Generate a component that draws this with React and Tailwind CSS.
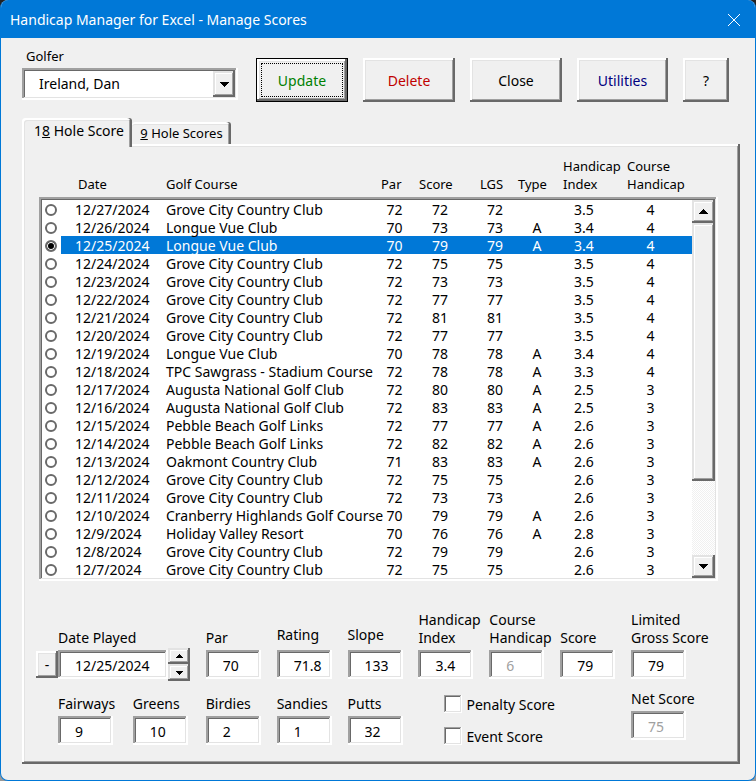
import { useState } from 'react';
import clsx from 'clsx';

const GROVE = 'Grove City Country Club';
const LONGUE = 'Longue Vue Club';
const AUGUSTA = 'Augusta National Golf Club';
const PEBBLE = 'Pebble Beach Golf Links';

const rounds = [
    { date: '12/27/2024', course: GROVE, par: 72, score: 72, lgs: 72, type: '', index: '3.5', handicap: 4 },
    { date: '12/26/2024', course: LONGUE, par: 70, score: 73, lgs: 73, type: 'A', index: '3.4', handicap: 4 },
    { date: '12/25/2024', course: LONGUE, par: 70, score: 79, lgs: 79, type: 'A', index: '3.4', handicap: 4 },
    { date: '12/24/2024', course: GROVE, par: 72, score: 75, lgs: 75, type: '', index: '3.5', handicap: 4 },
    { date: '12/23/2024', course: GROVE, par: 72, score: 73, lgs: 73, type: '', index: '3.5', handicap: 4 },
    { date: '12/22/2024', course: GROVE, par: 72, score: 77, lgs: 77, type: '', index: '3.5', handicap: 4 },
    { date: '12/21/2024', course: GROVE, par: 72, score: 81, lgs: 81, type: '', index: '3.5', handicap: 4 },
    { date: '12/20/2024', course: GROVE, par: 72, score: 77, lgs: 77, type: '', index: '3.5', handicap: 4 },
    { date: '12/19/2024', course: LONGUE, par: 70, score: 78, lgs: 78, type: 'A', index: '3.4', handicap: 4 },
    { date: '12/18/2024', course: 'TPC Sawgrass - Stadium Course', par: 72, score: 78, lgs: 78, type: 'A', index: '3.3', handicap: 4 },
    { date: '12/17/2024', course: AUGUSTA, par: 72, score: 80, lgs: 80, type: 'A', index: '2.5', handicap: 3 },
    { date: '12/16/2024', course: AUGUSTA, par: 72, score: 83, lgs: 83, type: 'A', index: '2.5', handicap: 3 },
    { date: '12/15/2024', course: PEBBLE, par: 72, score: 77, lgs: 77, type: 'A', index: '2.6', handicap: 3 },
    { date: '12/14/2024', course: PEBBLE, par: 72, score: 82, lgs: 82, type: 'A', index: '2.6', handicap: 3 },
    { date: '12/13/2024', course: 'Oakmont Country Club', par: 71, score: 83, lgs: 83, type: 'A', index: '2.6', handicap: 3 },
    { date: '12/12/2024', course: GROVE, par: 72, score: 75, lgs: 75, type: '', index: '2.6', handicap: 3 },
    { date: '12/11/2024', course: GROVE, par: 72, score: 73, lgs: 73, type: '', index: '2.6', handicap: 3 },
    { date: '12/10/2024', course: 'Cranberry Highlands Golf Course', par: 70, score: 79, lgs: 79, type: 'A', index: '2.6', handicap: 3 },
    { date: '12/9/2024', course: 'Holiday Valley Resort', par: 70, score: 76, lgs: 76, type: 'A', index: '2.8', handicap: 3 },
    { date: '12/8/2024', course: GROVE, par: 72, score: 79, lgs: 79, type: '', index: '2.6', handicap: 3 },
    { date: '12/7/2024', course: GROVE, par: 72, score: 75, lgs: 75, type: '', index: '2.6', handicap: 3 }
];

// Classic 3D bevels
const SUNKEN = 'shadow-[inset_-2px_-2px_#fff,inset_2px_2px_#a0a0a0,inset_-3px_-3px_#e3e3e3,inset_3px_3px_#696969]';
const RAISED = 'shadow-[inset_-2px_-2px_#696969,inset_2px_2px_#fff,inset_-3px_-3px_#a0a0a0,inset_3px_3px_#e3e3e3]';
const SCROLL = 'shadow-[inset_-2px_-2px_#696969,inset_2px_2px_#e3e3e3,inset_-3px_-3px_#a0a0a0,inset_3px_3px_#fff]';

const Arrow = ({ up, small }) => (
    <svg viewBox="0 0 9 5" className={clsx(small ? 'w-[7px] h-1' : 'w-[9px] h-[5px]')} shapeRendering="crispEdges" aria-hidden="true">
        <path d={up ? 'M0 5 L4.5 0 L9 5 Z' : 'M0 0 L4.5 5 L9 0 Z'} />
    </svg>
);

const ActionButton = ({ className, children }) => (
    <button type="button" className={clsx('h-11 bg-[#f0f0f0] pt-0.5', RAISED, className)}>{children}</button>
);

const Field = ({ id, label, value, disabled, className, labelClassName }) => (
    <div className={clsx('flex min-w-0 flex-col items-start', className)}>
        <label htmlFor={id} className={clsx('whitespace-pre leading-[18px]', labelClassName || 'mb-[3px]')}>{label}</label>
        <input
            id={id}
            defaultValue={value}
            disabled={disabled}
            className={clsx('h-[29px] w-[55px] bg-white pl-[17px] pr-1 pt-0.5 disabled:text-[#a0a0a0]', SUNKEN)}
        />
    </div>
);

const Check = ({ id, label }) => (
    <div className="flex h-[18px] items-center gap-1">
        <input
            id={id}
            type="checkbox"
            className="size-[18px] appearance-none bg-white shadow-[inset_-1px_-1px_#fff,inset_1px_1px_#a0a0a0,inset_-2px_-2px_#e3e3e3,inset_2px_2px_#696969] checked:bg-[#696969]"
        />
        <label htmlFor={id} className="whitespace-nowrap pt-0.5">{label}</label>
    </div>
);

const ScoreTable = ({ selected, onSelect }) => (
    <div>
        <table className="w-full table-fixed text-left text-[13px] leading-[18px]">
            <colgroup>
                <col className="w-[127px]" />
                <col />
                <col className="w-[38px]" />
                <col className="w-[61px]" />
                <col className="w-[38px]" />
                <col className="w-[45px]" />
                <col className="w-16" />
                <col className="w-[91px]" />
            </colgroup>
            <thead>
                <tr className="align-bottom *:p-0 *:font-normal">
                    <th className="pl-[39px]!">Date</th>
                    <th>Golf Course</th>
                    <th>Par</th>
                    <th>Score</th>
                    <th>LGS</th>
                    <th>Type</th>
                    <th>Handicap<br />Index</th>
                    <th>Course<br />Handicap</th>
                </tr>
            </thead>
        </table>
        <div className={clsx('mt-1 flex bg-white p-[3px]', SUNKEN)}>
            <div className="min-w-0 flex-1">
                <table className="w-full table-fixed text-center leading-[17px]">
                    <colgroup>
                        <col className="w-[19px]" />
                        <col className="w-[105px]" />
                        <col />
                        <col className="w-[45px]" />
                        <col className="w-[46px]" />
                        <col className="w-16" />
                        <col className="w-5" />
                        <col className="w-[74px]" />
                        <col className="w-[71px]" />
                    </colgroup>
                    <tbody>
                        {rounds.map((round, i) => (
                            <tr
                                key={round.date}
                                onClick={() => onSelect(i)}
                                className={clsx('h-[18px] *:p-0 *:pt-px', i === selected && 'text-white *:not-first:bg-[#0078d7]')}
                            >
                                <td>
                                    <input
                                        type="radio"
                                        name="round"
                                        aria-label={round.date}
                                        checked={i === selected}
                                        onChange={() => onSelect(i)}
                                        className="ml-[3px] block size-3 appearance-none rounded-full border-2 border-[#696969] bg-white checked:bg-black checked:shadow-[inset_0_0_0_1px_#fff]"
                                    />
                                </td>
                                <td className="pl-3.5! text-left">{round.date}</td>
                                <td className="text-left whitespace-nowrap">{round.course}</td>
                                <td>{round.par}</td>
                                <td>{round.score}</td>
                                <td>{round.lgs}</td>
                                <td>{round.type}</td>
                                <td>{round.index}</td>
                                <td className="pr-3!">{round.handicap}</td>
                            </tr>
                        ))}
                    </tbody>
                </table>
            </div>
            <div className="flex w-[23px] flex-col bg-[repeating-conic-gradient(#fff_0_25%,#f0f0f0_0_50%)] bg-size-[2px_2px]">
                <button type="button" aria-label="Scroll up" className={clsx('flex h-[23px] items-center justify-center bg-[#f0f0f0]', SCROLL)}>
                    <Arrow up />
                </button>
                <div className={clsx('flex-258 bg-[#f0f0f0]', SCROLL)} />
                <div className="flex-74" />
                <button type="button" aria-label="Scroll down" className={clsx('flex h-[23px] items-center justify-center bg-[#f0f0f0]', SCROLL)}>
                    <Arrow />
                </button>
            </div>
        </div>
    </div>
);

const DatePlayed = ({ date }) => (
    <div className="col-span-2">
        <label htmlFor="date-played" className="mb-[3px] block pl-[22px] leading-[18px]">Date Played</label>
        <div className="flex items-center">
            <button type="button" aria-label="Previous day" className={clsx('h-[27px] w-[22px] bg-[#f0f0f0]', RAISED)}>-</button>
            <input id="date-played" key={date} defaultValue={date} className={clsx('h-[29px] w-[110px] bg-white pl-[17px] pt-0.5', SUNKEN)} />
            <div className="-my-0.5 flex flex-col">
                <button type="button" aria-label="Later" className={clsx('flex h-4 w-[22px] items-center justify-center bg-[#f0f0f0]', SCROLL)}>
                    <Arrow up small />
                </button>
                <button type="button" aria-label="Earlier" className={clsx('flex h-[17px] w-[22px] items-center justify-center bg-[#f0f0f0]', SCROLL)}>
                    <Arrow small />
                </button>
            </div>
        </div>
    </div>
);

const App = () => {
    const [selected, setSelected] = useState(2);

    return (
        <div className="min-h-screen bg-linear-to-b from-[#222222] to-[#999999] font-['Noto_Sans','Open_Sans',sans-serif] text-sm text-black">
            <div className="flex min-h-screen flex-col overflow-hidden rounded-lg border-x border-b border-[#0078d7] bg-[#f0f0f0]">
                <header className="flex h-[38px] items-center justify-between bg-[#0078d7] pt-0.5 pl-[9px] pr-[15px] text-white">
                    <h1>Handicap Manager for Excel - Manage Scores</h1>
                    <button type="button" aria-label="Close window">
                        <svg viewBox="0 0 12 12" className="size-3" fill="none" stroke="currentColor">
                            <path d="M0 0 L12 12 M12 0 L0 12" />
                        </svg>
                    </button>
                </header>

                <main className="flex-1 pt-[9px] pr-[15px] pb-3.5 pl-[21px]">
                    <div className="flex items-end justify-between pr-[11px]">
                        <div className="mb-0.5">
                            <label htmlFor="golfer" className="mb-[3px] block pl-1 text-[13px] leading-[18px]">Golfer</label>
                            <div className={clsx('relative flex h-8 w-[216px] bg-white p-[3px]', SUNKEN)}>
                                <select id="golfer" className="w-full appearance-none bg-transparent pl-3.5">
                                    <option>Ireland, Dan</option>
                                </select>
                                <span className={clsx('pointer-events-none absolute inset-y-[3px] right-[3px] flex w-[22px] items-center justify-center bg-[#f0f0f0]', SCROLL)}>
                                    <Arrow />
                                </span>
                            </div>
                        </div>
                        <div className="flex gap-[15px]">
                            <button type="button" className={clsx('h-11 w-[92px] border border-black bg-[#f0f0f0] p-1', RAISED)}>
                                <span className="flex size-full items-center justify-center border border-dotted border-black pt-0.5 text-[#008000]">Update</span>
                            </button>
                            <ActionButton className="w-[92px] text-[#c00000]">Delete</ActionButton>
                            <ActionButton className="w-[92px]">Close</ActionButton>
                            <ActionButton className="w-[91px] text-[#000080]">Utilities</ActionButton>
                            <ActionButton className="w-[46px]">?</ActionButton>
                        </div>
                    </div>

                    <div role="tablist" className="relative mt-4 flex items-end">
                        <button
                            type="button"
                            role="tab"
                            aria-selected="true"
                            className="-mb-[3px] h-[29px] w-[110px] rounded-t-[3px] bg-[#f0f0f0] pb-1 pl-1 shadow-[inset_-2px_0_#696969,inset_2px_2px_#fff,inset_-3px_0_#a0a0a0,inset_3px_3px_#e3e3e3]"
                        >
                            1<u>8</u> Hole Score
                        </button>
                        <button
                            type="button"
                            role="tab"
                            aria-selected="false"
                            className="h-[22px] w-[99px] rounded-t-[3px] bg-[#f0f0f0] text-[13px] shadow-[inset_-2px_0_#696969,inset_0_2px_#fff,inset_-3px_0_#a0a0a0,inset_0_3px_#e3e3e3]"
                        >
                            <u>9</u> Hole Scores
                        </button>
                    </div>

                    <div role="tabpanel" className={clsx('pt-[13px] pr-[22px] pb-[19px] pl-[17px]', RAISED)}>
                        <ScoreTable selected={selected} onSelect={setSelected} />

                        <form className="-ml-[3px] mt-[30px] pr-4">
                            <div className="grid grid-cols-[97fr_73fr_71fr_71fr_71fr_71fr_71fr_71fr_71fr] items-end">
                                <DatePlayed date={rounds[selected].date} />
                                <Field id="par" label="Par" value="70" />
                                <Field id="rating" label="Rating" value="71.8" labelClassName="mb-1.5" />
                                <Field id="slope" label="Slope" value="133" labelClassName="mb-1.5" />
                                <Field id="index" label={'Handicap\nIndex'} value="3.4" />
                                <Field id="course-handicap" label={'Course\nHandicap'} value="6" disabled />
                                <Field id="score" label="Score" value="79" />
                                <Field id="lgs" label={'Limited\nGross Score'} value="79" />
                            </div>
                            <div className="mt-[11px] grid h-[55px] grid-cols-[97fr_73fr_71fr_71fr_71fr_71fr_71fr_71fr_71fr] items-end">
                                <Field id="fairways" label="Fairways" value="9" className="pl-[22px]" />
                                <Field id="greens" label="Greens" value="10" />
                                <Field id="birdies" label="Birdies" value="2" />
                                <Field id="sandies" label="Sandies" value="1" />
                                <Field id="putts" label="Putts" value="32" />
                                <div className="col-span-3 flex flex-col gap-3.5 pl-[26px]">
                                    <Check id="penalty" label="Penalty Score" />
                                    <Check id="event" label="Event Score" />
                                </div>
                                <Field id="net" label="Net Score" value="75" disabled className="self-start" />
                            </div>
                        </form>
                    </div>
                </main>
            </div>
        </div>
    );
};

export default App;
